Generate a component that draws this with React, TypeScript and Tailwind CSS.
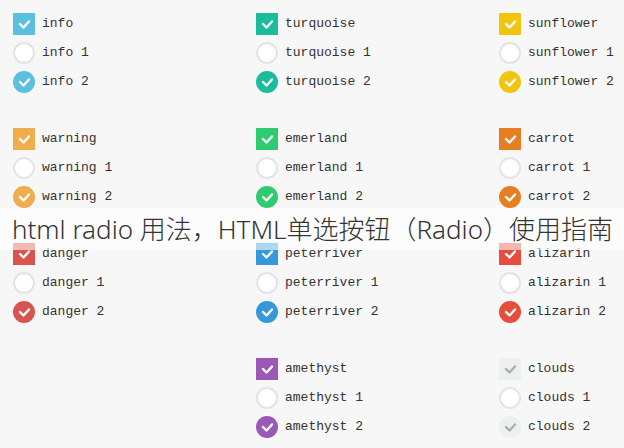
import { FC } from "react";

type Item = { name: string; bg: string; check: string };

const columns: (Item | null)[][] = [
  [
    { name: "info", bg: "bg-[#5bc0de]", check: "#ffffff" },
    { name: "warning", bg: "bg-[#f0ad4e]", check: "#ffffff" },
    { name: "danger", bg: "bg-[#d9534f]", check: "#ffffff" },
    null,
  ],
  [
    { name: "turquoise", bg: "bg-[#1abc9c]", check: "#ffffff" },
    { name: "emerland", bg: "bg-[#2ecc71]", check: "#ffffff" },
    { name: "peterriver", bg: "bg-[#3498db]", check: "#ffffff" },
    { name: "amethyst", bg: "bg-[#9b59b6]", check: "#ffffff" },
  ],
  [
    { name: "sunflower", bg: "bg-[#f1c40f]", check: "#ffffff" },
    { name: "carrot", bg: "bg-[#e67e22]", check: "#ffffff" },
    { name: "alizarin", bg: "bg-[#e74c3c]", check: "#ffffff" },
    { name: "clouds", bg: "bg-[#ecf0f1]", check: "#a9b0b4" },
  ],
];

const Check: FC<{ color: string }> = ({ color }) => (
  <svg width="22" height="22" viewBox="0 0 22 22">
    <polyline
      points="7,11 10.5,14.5 16,8.5"
      fill="none"
      stroke={color}
      strokeWidth="2.4"
      strokeLinecap="round"
      strokeLinejoin="round"
    />
  </svg>
);

const Row: FC<{ label: string; children: React.ReactNode }> = ({ label, children }) => (
  <div className="flex items-center gap-[7px] h-[29px]">
    {children}
    <span className="text-[13px] text-[#333]">{label}</span>
  </div>
);

const Group: FC<{ item: Item | null }> = ({ item }) => {
  if (!item) return <div className="h-[115px]" />;
  return (
    <div className="h-[115px]">
      <Row label={item.name}>
        <div className={`w-[22px] h-[22px] ${item.bg}`}>
          <Check color={item.check} />
        </div>
      </Row>
      <Row label={`${item.name} 1`}>
        <div className="w-[22px] h-[22px] rounded-full bg-white border-2 border-[#e4e4e4]" />
      </Row>
      <Row label={`${item.name} 2`}>
        <div className={`w-[22px] h-[22px] rounded-full ${item.bg}`}>
          <Check color={item.check} />
        </div>
      </Row>
    </div>
  );
};

export default function App() {
  return (
    <div
      className="relative w-[624px] h-[448px] overflow-hidden bg-[#f7f7f7] pt-[9px] pl-[13px]"
      style={{ fontFamily: '"Liberation Mono", "DejaVu Sans Mono", monospace' }}
    >
      <div className="grid grid-cols-[243px_243px_120px]">
        {columns.map((col, i) => (
          <div key={i}>
            {col.map((item, j) => (
              <Group key={j} item={item} />
            ))}
          </div>
        ))}
      </div>
      <div className="absolute left-0 right-0 top-[208px] h-[42px] bg-white/60 flex items-center pl-[12px]">
        <span
          className="text-[26px] font-light text-[#333] leading-none whitespace-nowrap"
          style={{ fontFamily: '"Noto Sans", "Noto Sans CJK SC", sans-serif' }}
        >
          html radio 用法，HTML单选按钮（Radio）使用指南
        </span>
      </div>
    </div>
  );
}
